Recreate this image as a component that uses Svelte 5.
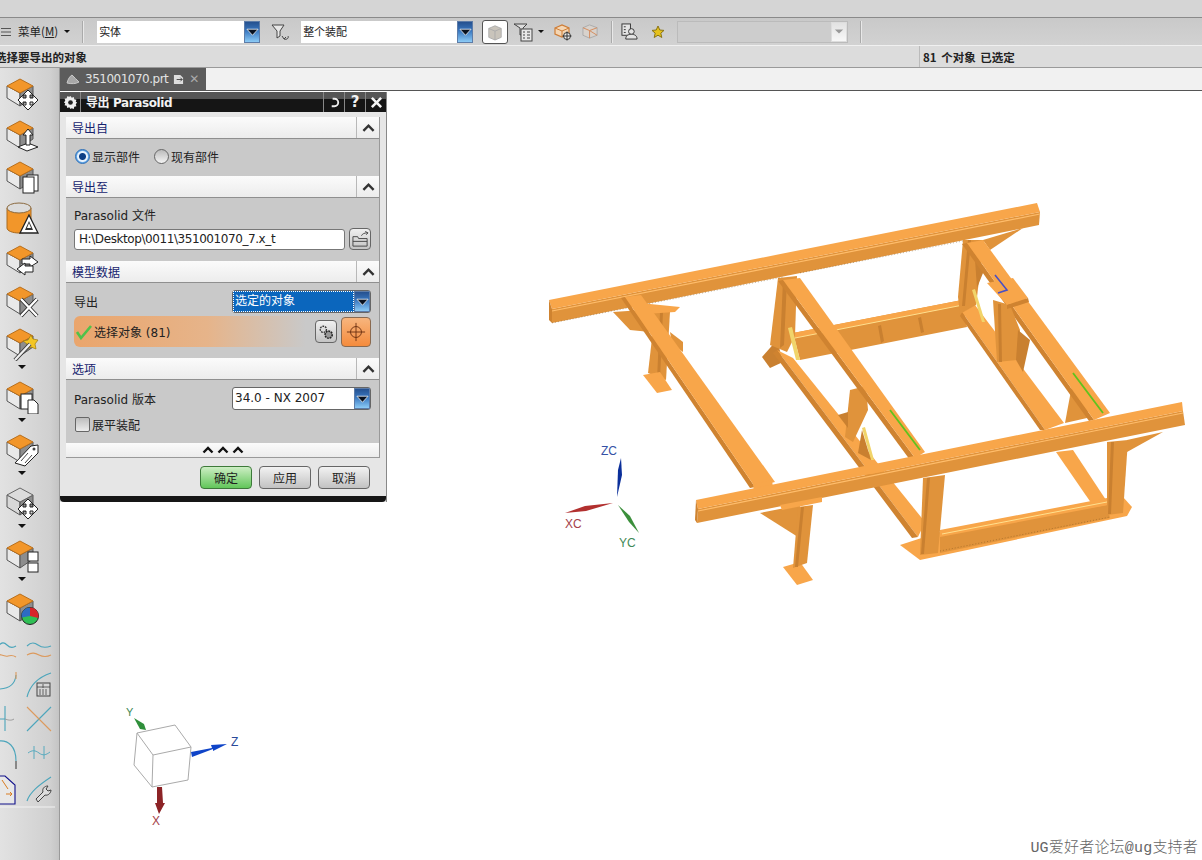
<script>
	const railItems = [
		{ kind: 'move' },
		{ kind: 'lift' },
		{ kind: 'copy' },
		{ kind: 'cyl' },
		{ kind: 'swap' },
		{ kind: 'cross' },
		{ kind: 'wand', caret: true },
		{ kind: 'pages', caret: true },
		{ kind: 'tag', caret: true },
		{ kind: 'ghost', caret: true },
		{ kind: 'split', caret: true },
		{ kind: 'pie' }
	];

	// four way arrow, the overlaps give the small hash in the middle
	const moveArrows = 'M27 12l5 5h-3v3h3v-3l5 5-5 5v-3h-3v3h3l-5 5-5-5h3v-3h-3v3l-5-5 5-5v3h3v-3h-3z';
</script>

{#snippet box(gray = false)}
	<path d="M2 9 15 16v13L2 21z" fill={gray ? '#d8d8d8' : '#e9e9e9'} stroke="#555" stroke-width="1" />
	<path d="M15 16 28 9v11L15 29z" fill="#8d8d8d" stroke="#555" stroke-width="1" />
	<path d="M15 2 28 9 15 16 2 9z" fill={gray ? '#dcdcdc' : '#f2962a'} stroke={gray ? '#666' : '#b96f1c'} stroke-width="1" />
{/snippet}

{#snippet railIcon(kind)}
	<svg class="cube" viewBox="0 0 38 34" width="38" height="34">
		{#if kind === 'cyl'}
			<path d="M2 6v20c0 3 6 5 12 5s12-2 12-5V6z" fill="#f2962a" stroke="#a86a20" />
			<ellipse cx="14" cy="6" rx="12" ry="5" fill="#dcdcdc" stroke="#8b6a40" />
		{:else}
			{@render box(kind === 'ghost')}
		{/if}

		<g transform="translate(-4 0)">
			{#if kind === 'cyl'}
				<path d="M28 13 37 31H19z" fill="#fff" stroke="#222" stroke-width="1.300" />
				<path d="M28 19 32 28H24z" fill="#333" />
				<path d="M28 21 30 26H26z" fill="#fff" />
			{:else if kind === 'move' || kind === 'ghost'}
				<path d={moveArrows} fill="#fff" stroke="#222" stroke-width="1" transform="translate(0 1)" />
			{:else if kind === 'lift'}
				<path d="M26 32l-9-4 10-4 10 4z" fill="#fff" stroke="#222" />
				<path d="M27 10l5 6h-3v10h-4V16h-3z" fill="#fff" stroke="#222" />
			{:else if kind === 'copy'}
				<rect x="26" y="15" width="11" height="16" fill="#fff" stroke="#222" />
				<rect x="22" y="17" width="11" height="16" fill="#fff" stroke="#222" />
			{:else if kind === 'swap'}
				<path d="M21 15h8v-3l8 6-8 5v-3h-8z" fill="#fff" stroke="#222" />
				<path d="M32 22h-8v-3l-8 6 8 6v-3h8z" fill="#fff" stroke="#222" />
			{:else if kind === 'cross'}
				<path d="M20 14l16 17M36 14 20 31" stroke="#222" stroke-width="4" fill="none" />
				<path d="M20 14l16 17M36 14 20 31" stroke="#fff" stroke-width="2.400" fill="none" />
			{:else if kind === 'wand'}
				<path d="M30 8l2 4 5 1-3 4 1 5-5-2-4 2v-5l-4-3 5-1z" fill="#f3c624" stroke="#9c7a10" stroke-width=".7" />
				<path d="M14 33 29 17" stroke="#333" stroke-width="4" />
				<path d="M14 33 29 17" stroke="#eee" stroke-width="2.400" />
			{:else if kind === 'pages'}
				<rect x="20" y="14" width="11" height="15" fill="#fff" stroke="#222" />
				<path d="M27 20h6l4 4v10H27z" fill="#fff" stroke="#222" />
			{:else if kind === 'tag'}
				<path d="M14 30 30 13l7-1v8L24 33z" fill="#fff" stroke="#222" />
				<circle cx="33" cy="16" r="1.500" fill="#444" />
				<path d="M20 28l7-8M24 30l7-8" stroke="#444" stroke-width="1" />
			{:else if kind === 'split'}
				<rect x="27" y="13" width="10" height="9" fill="#fff" stroke="#222" />
				<rect x="27" y="24" width="10" height="9" fill="#fff" stroke="#222" />
			{:else if kind === 'pie'}
				<circle cx="29" cy="24" r="8.500" fill="#2fbf55" stroke="#222" />
				<path d="M29 24V15.500A8.500 8.500 0 0 1 37.300 26z" fill="#d8232a" />
				<path d="M29 24 20.600 25.500A8.500 8.500 0 0 1 29 15.500z" fill="#2d6cc4" />
			{/if}
		</g>
	</svg>
{/snippet}

{#snippet ddArrow()}
	<span class="dd">
		<svg viewBox="0 0 14 8" width="13" height="8"><path d="M1 1h12L7 7.500z" fill="#08111f" stroke="#fff" stroke-width=".8" /></svg>
	</span>
{/snippet}

{#snippet chevron()}
	<svg viewBox="0 0 14 10" width="13" height="10"><path d="M1.500 8 7 2.500 12.500 8" fill="none" stroke="#333" stroke-width="2.600" /></svg>
{/snippet}

{#snippet section(title)}
	<div class="sec-head">
		<span>{title}</span>
		<i>{@render chevron()}</i>
	</div>
{/snippet}

<div class="app">
	<div class="topstrip"></div>

	<div class="toolbar">
		<svg class="burger" viewBox="0 0 10 10" width="10" height="10"><path d="M0 1.500h10M0 5h10M0 8.500h10" stroke="#555" /></svg>
		<span class="menu">菜单(<u>M</u>)</span>
		<span class="caret"></span>
		<span class="sep s1"></span>
		<div class="combo c1"><span>实体</span>{@render ddArrow()}</div>
		<svg class="tool t-filter" viewBox="0 0 20 18" width="20" height="18">
			<path d="M1 2h12L9 8v5L6 15V8z" fill="#e8e8e8" stroke="#444" />
			<path d="M13 16c3 1 5-1 4-3M11 13l2 3 2-2" fill="none" stroke="#444" />
		</svg>
		<div class="combo c2"><span>整个装配</span>{@render ddArrow()}</div>
		<button class="toggle" aria-label="实体">
			<svg viewBox="0 0 18 20" width="16" height="18">
				<path d="M2 6 9 3l7 3v10l-7 3-7-3z" fill="#c9c4bb" stroke="#aaa" />
				<path d="M2 6l7 3 7-3M9 9v10" fill="none" stroke="#aaa" />
			</svg>
		</button>
		<svg class="tool t-list" viewBox="0 0 20 20" width="20" height="20">
			<path d="M1 2h13l-4 4v6L7 13V6z" fill="#ddd" stroke="#444" />
			<rect x="8" y="7" width="11" height="12" fill="#e8e8e8" stroke="#444" />
			<path d="M10 10h2M14 10h3M10 13h2M14 13h3M10 16h2M14 16h3" stroke="#444" />
		</svg>
		<span class="caret c-list"></span>
		<svg class="tool t-box" viewBox="0 0 18 18" width="18" height="18">
			<path d="M1 5 8 2l7 3v6l-7 3-7-3z" fill="#f4d6b4" stroke="#cf7d36" stroke-width="1.200" />
			<path d="M1 5l7 3 7-3M8 8v6" fill="none" stroke="#cf7d36" />
			<circle cx="13" cy="13" r="3.500" fill="#eee" stroke="#333" />
			<path d="M13 8.500v9M8.500 13h9" stroke="#333" />
		</svg>
		<svg class="tool t-box2" viewBox="0 0 18 18" width="17" height="17">
			<path d="M1 5 8 2l8 3v8l-8 3-7-3z" fill="#d8d2cc" stroke="#aaa" />
			<path d="M1 5l7 3 8-3M8 8v8M8 8l8 5" fill="none" stroke="#d58a5a" />
		</svg>
		<span class="sep s2"></span>
		<svg class="tool t-people" viewBox="0 0 18 18" width="17" height="17">
			<rect x="1" y="1" width="9" height="12" fill="#e4e4e4" stroke="#333" />
			<path d="M3 4h2M3 7h2M3 10h2" stroke="#333" />
			<circle cx="11" cy="9" r="3" fill="#e4e4e4" stroke="#333" />
			<path d="M5 17c0-4 3-5 6-5s6 1 6 5z" fill="#e4e4e4" stroke="#333" />
		</svg>
		<svg class="tool t-star" viewBox="0 0 14 14" width="14" height="14">
			<path d="M7 1l1.800 4 4.200.4-3.200 2.800 1 4.300L7 10.200 3.200 12.500l1-4.300L1 5.400 5.200 5z" fill="#e6c21c" stroke="#8a7414" />
		</svg>
		<div class="combo c3">
			<span class="dd off"><svg viewBox="0 0 12 7" width="10" height="7"><path d="M1 1h10L6 6z" fill="#999" /></svg></span>
		</div>
		<span class="sep s3"></span>
	</div>

	<div class="status">
		<span class="prompt">选择要导出的对象</span>
		<span class="selected">81 个对象 已选定</span>
	</div>

	<div class="main">
		<aside class="rail">
			{#each railItems as item}
				<div class="rail-item" class:has-caret={item.caret}>
					{@render railIcon(item.kind)}
					{#if item.caret}<span class="caret small"></span>{/if}
				</div>
			{/each}

			<svg class="curves" viewBox="0 0 60 172" width="60" height="172" fill="none">
				<g stroke="#4ba5bb" stroke-width="1.100">
					<path d="M-2 7c4-4 6-4 9-1s6 3 9 1" />
					<path d="M27 7c4-4 7-4 11-1s8 3 13 1" />
					<path d="M-2 50c9 0 17-3 18-14" />
					<path d="M27 58c3-12 12-20 24-24" />
					<path d="M5 67v25M-2 80h7" />
					<path d="M27 92 51 68" />
					<path d="M-1 102c9-1 17 5 17 20" />
					<path d="M28 114c4-3 7-3 11 0s7 2 11-1M34 107v13M44 107v13" stroke-width=".9" />
					<path d="M27 162c3-9 12-16 24-24" />
				</g>
				<g stroke="#dc995c" stroke-width="1.100">
					<path d="M-2 15c4 1 7 3 10 2s5-1 8 1" />
					<path d="M27 16c5-3 8-2 12 0s8 2 12 0" />
					<path d="M16 33v7" />
					<path d="M27 68l24 24" />
				</g>
				<path d="M5 80c3 1 6 2 9 0" stroke="#9a9a9a" />
				<path d="M16 122v8" stroke="#333" />
				<rect x="37" y="44" width="13" height="13" fill="#d6d6d6" stroke="#444" />
				<path d="M37 48h13M40 50v6M43 50v6M46 50v6M43 45v4" stroke="#444" stroke-width=".8" />
				<path d="M-1 137h6l10 9v19H-1" fill="#e8e8e8" stroke="#10108a" stroke-width="1.100" />
				<path d="M2 141l6 9M6 155h6m-2-2 2 2-2 2" stroke="#d97c22" stroke-width="1" />
				<path d="M36 160l7-7c-1-3 1-6 5-6l-2 3 2 2 3-1c0 3-3 6-6 5l-7 7z" fill="#ddd" stroke="#444" />
				<path d="M0 168h55" stroke="#f1f1f1" stroke-width="1.200" />
			</svg>
		</aside>

		<div class="work">
			<div class="tabs">
				<div class="tab">
					<svg viewBox="0 0 14 12" width="14" height="12"><path d="M1 10c1-4 3-7 5-8 2 2 5 5 7 7-3 2-8 2-12 1z" fill="#a8a8a8" stroke="#c8c8c8" /></svg>
					<span>351001070.prt</span>
					<svg viewBox="0 0 12 12" width="11" height="11"><path d="M1 1h7l3 3v7H1z" fill="#ddd" /><path d="M4 6h6M8 4l2 2-2 2" stroke="#444" fill="none" /></svg>
					<b>✕</b>
				</div>
			</div>

			<div class="canvas">
				<svg class="scene" viewBox="60 91 1142 769" width="1142" height="769">
					<!-- feet and lower cross members, back to front -->
					<g class="model">
						<path class="web" d="M793 333 962 300 967 327 800 360z" />
						<path class="top" d="M793 333 962 300 963 305 795 338z" />
						<path d="M795 338 963 305" stroke="#ffe08e" fill="none" />
						<path class="shade" d="M878 326l3-1 3 16-3 2zM918 318l3-1 3 15-3 1z" />
						<path class="shade" d="M762 357l15-17 6 22-13 6z" />

						<path class="top" d="M777 350 793 358 925 522 918 537z" />
						<path class="dark" d="M773 353 777 350 918 537 912 538z" />
						<path class="top" d="M962 312 975 305 1064 423 1045 430z" />
						<path class="dark" d="M960 316 962 312 1045 430 1040 430z" />
						<path class="top" d="M1056 452 1073 450 1106 500 1096 510z" />

						<!-- back legs -->
						<path class="web" d="M655 312 670 312 666 380 648 373z" />
						<path class="shade" d="M660 312h3l-3 68h-3z" />
						<path class="top" d="M643 375 657 393 672 390 660 372z" />
						<path class="web" d="M613 312 657 309 650 332 630 330z" />
						<path class="top" d="M640 303 680 307 675 312 645 314z" />
						<path class="web" d="M670 332 683 342 683 352 672 344z" />

						<path class="web" d="M778 278 797 276 795 336 787 352 770 345z" />
						<path class="shade" d="M783 280h4l-3 65-4 3z" />
						<path class="web" d="M963 240 984 240 976 305 960 314 958 297z" />
						<path class="shade" d="M968 240h3l-6 66h-3z" />
						<path class="shade" d="M975 260l10 8-8 20z" />

						<!-- center back legs -->
						<path class="web" d="M850 390 866 386 868 410 853 442 845 437z" />
						<path class="shade" d="M838 415 848 412 848 428z" />
						<path class="web" d="M1072 385 1090 390 1087 418 1065 423z" />

						<!-- back rail -->
						<path class="web" d="M552 309 1040 212 1039 225 552 323z" />
						<path class="top" d="M549 300 1037 203 1040 212 552 309z" />
						<path d="M552 311 1040 214" stroke="#ffbd6b" stroke-width="1.200" fill="none" />
						<path class="edge" d="M552 323 783 277M800 273 963 241" />
						<path class="dark" d="M549 300 552 309 552 323 549 320z" />
						<path class="web" d="M983 240 1023 228 990 250z" />

						<!-- long side members -->
						<path class="dark" d="M621 298 625 297 755 487 750 488z" />
						<path class="top" d="M625 297 641 295 775 482 755 487z" />
						<path class="dark" d="M778 281 783 280 915 458 910 460z" />
						<path class="top" d="M783 280 800 278 925 452 915 458z" />
						<path class="dark" d="M962 244 967 243 1094 420 1089 421z" />
						<path class="top" d="M967 243 983 240 1110 413 1094 420z" />

						<!-- gussets -->
						<path d="M788 328 792 327 800 360 796 360z" fill="#f1d46a" />
						<path d="M972 290 975 289 985 322 982 322z" fill="#f1d46a" />
						<path d="M862 428 865 427 874 460 871 460z" fill="#f1d46a" />
						<path class="shade" d="M862 430l9 30-13-7z" />

						<!-- block with the blue mark and its leg -->
						<path class="web" d="M993 300 1010 305 1020 330 1017 360 997 362z" />
						<path class="shade" d="M998 304h3l1 58h-3z" />
						<path class="shade" d="M1018 330 1030 340 1023 372 1016 360z" />
						<path class="top" d="M987 283 1013 278 1028 298 1007 305z" />
						<path class="dark" d="M1007 305 1028 298 1029 302 1007 309z" />
						<path d="M995 275 1007 290 998 293" fill="none" stroke="#4a4fc4" stroke-width="1.600" />

						<!-- front frame -->
						<path class="top" d="M900 545 920 560 1127 516 1132 507 1123 497 940 532z" />
						<path class="web" d="M940 534 1107 505 1110 518 940 553z" />
						<path class="top" d="M940 530 1107 498 1108 505 940 537z" />
						<path d="M942 534 1107 502" stroke="#ffe08e" fill="none" />
						<path class="edge" d="M940 551 1110 517" />
						<path class="web" d="M923 478 945 475 938 553 920 555z" />
						<path class="shade" d="M927 478h3l-6 76h-3z" />
						<path class="web" d="M1107 442 1128 440 1123 513 1107 515z" />
						<path class="shade" d="M1111 442h3l-3 72h-3z" />
						<path class="top" d="M753 484 772 480 773 488 754 492z" />

						<!-- front left leg -->
						<path class="web" d="M760 513 800 505 798 537z" />
						<path class="top" d="M783 567 797 585 813 580 800 562z" />
						<path class="web" d="M798 507 813 505 807 563 793 568z" />
						<path class="shade" d="M801 507h3l-6 60h-3z" />
						<path class="web" d="M1127 452 1163 432 1127 440z" />

						<!-- front rail -->
						<path class="web" d="M698 509 1183 411 1185 425 697 523z" />
						<path class="top" d="M696 500 1182 402 1183 411 698 509z" />
						<path d="M698 511 1183 413" stroke="#ffbd6b" stroke-width="1.200" fill="none" />
						<path class="dark" d="M696 500 698 509 697 523 695 520z" />
						<path class="top" d="M780 505 822 497 822 502 782 510z" />
					</g>
					<path d="M890 410 920 450M1073 373 1103 413" stroke="#5fc31d" stroke-width="1.800" />

					<!-- datum triad -->
					<path d="M617 497 618 470 621 458 622 475z" fill="#0b2f9a" />
					<path d="M613 503 585 506 565 513 586 511z" fill="#b2302f" />
					<path d="M618 505 630 516 639 533 629 522z" fill="#3b8f3b" />
					<text x="601" y="455" class="triad" fill="#3551a5">ZC</text>
					<text x="565" y="528" class="triad" fill="#a5414a">XC</text>
					<text x="619" y="547" class="triad" fill="#3f8a56">YC</text>

					<!-- orientation cube -->
					<path d="M137 733 175 725 191 747 153 755zM137 733 134 765 152 787 188 780 191 747M153 755 152 787" fill="#fff" stroke="#aaa" />
					<path d="M191 752 212 748 211 745 227 744 213 751 213 749 192 757z" fill="#0f44c8" />
					<path d="M157 787h5l1 16 2 0-6 11-4-11h2z" fill="#8c2326" />
					<path d="M146 730 140 729 134 718 144 724z" fill="#2f8f3a" />
					<text x="231" y="746" class="triad" fill="#2a4a9a">Z</text>
					<text x="152" y="825" class="triad" fill="#a5414a">X</text>
					<text x="126" y="716" class="triad small" fill="#3f8a56">Y</text>
				</svg>

				<div class="dialog">
					<div class="title">
						<span class="t-gear">
							<svg viewBox="0 0 16 16" width="15" height="15"><path d="M8 1l1.300 1.900 2.200-.7.500 2.300 2.300.5-.7 2.200L15 8l-1.400 1.800.7 2.200-2.300.5-.5 2.300-2.200-.7L8 15l-1.300-1.900-2.200.7-.5-2.300-2.300-.5.7-2.200L1 8l1.400-1.800-.7-2.200 2.300-.5.500-2.300 2.200.7z" fill="#eee" /><circle cx="8" cy="8" r="2.500" fill="#222" /></svg>
						</span>
						<span class="t-text">导出 Parasolid</span>
						<span class="t-btn"><svg viewBox="0 0 14 14" width="13" height="13"><path d="M5 3h2a4 4 0 0 1 0 8H4" fill="none" stroke="#eee" stroke-width="2" /></svg></span>
						<span class="t-btn q">?</span>
						<span class="t-btn x"><svg viewBox="0 0 14 14" width="13" height="13"><path d="M2 2l10 10M12 2 2 12" stroke="#f4f4f4" stroke-width="2.800" /></svg></span>
					</div>

					<div class="sections">
						{@render section('导出自')}
						<div class="sec-body radios">
							<label class="radio on"><i></i>显示部件</label>
							<label class="radio"><i></i>现有部件</label>
						</div>

						{@render section('导出至')}
						<div class="sec-body file">
							<div class="lbl">Parasolid 文件</div>
							<div class="file-row">
								<div class="input">H:\Desktop\0011\351001070_7.x_t</div>
								<button class="mini" aria-label="浏览">
									<svg viewBox="0 0 20 18" width="19" height="17" fill="none" stroke="#444"><path d="M2 16V6h5l1 2h9v8zM2 11h15" /><path d="M11 5c1-2 3-3 6-3m-2-1.500L18 2l-2 2" /></svg>
								</button>
							</div>
						</div>

						{@render section('模型数据')}
						<div class="sec-body data">
							<div class="row">
								<span>导出</span>
								<div class="select sel"><span>选定的对象</span>{@render ddArrow()}</div>
							</div>
							<div class="pick">
								<svg viewBox="0 0 18 16" width="18" height="16"><path d="M2 8l4 6L16 2" fill="none" stroke="#4fc24a" stroke-width="2.600" /></svg>
								<span>选择对象 (81)</span>
								<button class="mini gear" aria-label="设置">
									<svg viewBox="0 0 18 18" width="16" height="16"><circle cx="6" cy="6" r="3.500" fill="#ddd" stroke="#333" stroke-width="1.500" stroke-dasharray="2 1" /><circle cx="12" cy="12" r="4" fill="#999" stroke="#222" stroke-width="1.800" stroke-dasharray="2 1" /></svg>
								</button>
								<button class="target" aria-label="选择">
									<svg viewBox="0 0 22 22" width="20" height="20" fill="none" stroke="#6b2f10"><circle cx="11" cy="11" r="6" /><path d="M11 1v20M1 11h20" /></svg>
								</button>
							</div>
						</div>

						{@render section('选项')}
						<div class="sec-body opts">
							<div class="row">
								<span>Parasolid 版本</span>
								<div class="select"><span>34.0 - NX 2007</span>{@render ddArrow()}</div>
							</div>
							<label class="check"><i></i>展平装配</label>
						</div>

						<div class="more">
							{#each [0, 1, 2] as n (n)}
								<svg viewBox="0 0 12 8" width="12" height="8"><path d="M1.500 6.500 6 2l4.500 4.500" fill="none" stroke="#111" stroke-width="2.400" /></svg>
							{/each}
						</div>
					</div>

					<div class="actions">
						<button class="ok">确定</button>
						<button>应用</button>
						<button>取消</button>
					</div>
					<div class="foot"></div>
				</div>

				<div class="watermark">UG爱好者论坛@ug支持者</div>
			</div>
		</div>
	</div>
</div>

<style>
	:global(body) {
		margin: 0;
		background: #fff;
	}

	.app {
		width: 1202px;
		height: 860px;
		overflow: hidden;
		display: flex;
		flex-direction: column;
		font-family: "DejaVu Sans", "Noto Sans CJK SC", sans-serif;
		font-size: 12px;
		color: #222;
	}

	.topstrip {
		height: 17px;
		flex: none;
		background: #d5d5d5;
		border-bottom: 1px solid #8a8a8a;
	}

	/* ── toolbar ── */
	.toolbar {
		height: 27px;
		flex: none;
		display: flex;
		align-items: center;
		background: linear-gradient(#c9c9c9, #d2d2d2);
		border-bottom: 1px solid #f0f0f0;
	}

	.burger { margin-left: 1px; }

	.menu {
		margin: -1px 0 0 7px;
		font-family: "Noto Sans CJK SC", sans-serif;
		font-size: 11.500px;
	}

	.caret {
		width: 0;
		height: 0;
		border: 3px solid transparent;
		border-top: 3px solid #111;
		border-bottom: 0;
		margin-left: 6px;
		flex: none;
	}

	.caret.small {
		margin: 4px 0 0 0;
		border-width: 4px 4px 0;
		border-color: #111 transparent transparent;
	}

	.sep {
		width: 1px;
		height: 22px;
		background: #aaa;
		box-shadow: 1px 0 #e8e8e8;
		flex: none;
	}

	.s1 { margin-left: 12px; }
	.s2 { margin-left: 12px; }
	.s3 { margin-left: 12px; }

	.combo {
		height: 22px;
		background: #fff;
		display: flex;
		align-items: stretch;
		justify-content: space-between;
		flex: none;
		box-sizing: border-box;
	}

	.combo > span:first-child:not(.dd) {
		padding: 2px 0 0 2px;
		font-family: "Noto Sans CJK SC", sans-serif;
		font-size: 11px;
	}

	.c1 { width: 163px; margin-left: 14px; }
	.c2 { width: 172px; margin-left: 10px; }
	.c3 {
		width: 171px;
		margin-left: 12px;
		background: #cdcdcd;
		border: 1px solid #bbb;
		justify-content: flex-end;
	}

	.dd {
		width: 16px;
		display: flex;
		align-items: center;
		justify-content: center;
		flex: none;
		background: linear-gradient(#25508f, #3a78c0 45%, #8ccbf6);
		border: 1px solid #5d7ca8;
		box-sizing: border-box;
	}

	.dd.off {
		background: linear-gradient(#e2e2e2, #f8f8f8);
		border-color: #ddd;
	}

	.tool { flex: none; }
	.t-filter { margin-left: 11px; }
	.t-list { margin-left: 5px; }
	.c-list { margin-left: 5px; }
	.t-box { margin-left: 10px; }
	.t-box2 { margin-left: 10px; }
	.t-people { margin-left: 9px; }
	.t-star { margin-left: 13px; }

	.toggle {
		width: 26px;
		height: 24px;
		margin-left: 9px;
		padding: 0;
		background: #fff;
		border: 1px solid #555;
		border-radius: 3px;
		display: flex;
		align-items: center;
		justify-content: center;
		flex: none;
	}

	/* ── status line ── */
	.status {
		height: 21px;
		flex: none;
		display: flex;
		align-items: center;
		background: #dcdcdc;
		border-bottom: 1px solid #9a9a9a;
		font-family: "Noto Sans CJK SC", sans-serif;
		font-size: 11.500px;
		font-weight: 700;
	}

	.prompt { margin-left: -5px; width: 924px; flex: none; }
	.selected {
		border-left: 1px solid #bbb;
		padding-left: 3px;
		height: 100%;
		display: flex;
		align-items: center;
		word-spacing: 2px;
	}

	/* ── left rail ── */
	.main {
		flex: 1;
		display: flex;
		min-height: 0;
	}

	.rail {
		width: 60px;
		flex: none;
		box-sizing: border-box;
		padding-top: 9px;
		background: linear-gradient(90deg, #e2e2e2, #d0d0d0 85%, #c4c4c4);
		border-right: 1px solid #999;
		display: flex;
		flex-direction: column;
	}

	.rail-item {
		height: 41.700px;
		padding-left: 5px;
		flex: none;
	}

	.rail-item.has-caret {
		height: 53px;
		display: flex;
		flex-direction: column;
	}

	.rail-item .caret.small {
		margin-left: 13px;
	}

	.curves {
		margin-top: 5px;
		flex: none;
	}

	/* ── work area ── */
	.work {
		flex: 1;
		min-width: 0;
		display: flex;
		flex-direction: column;
	}

	.tabs {
		height: 23px;
		flex: none;
		background: #f1f1f1;
		border-bottom: 1px solid #555;
		box-sizing: border-box;
	}

	.tab {
		width: 146px;
		height: 22px;
		box-sizing: border-box;
		padding-left: 6px;
		background: #5c5c5c;
		color: #e2e2e2;
		display: flex;
		align-items: center;
		gap: 5px;
		font-size: 12px;
	}

	.tab span { letter-spacing: -.5px; }

	.tab b {
		font-weight: 400;
		font-size: 12px;
		color: #aaa;
	}

	.canvas {
		flex: 1;
		position: relative;
		background: #fff;
		overflow: hidden;
	}

	.scene {
		position: absolute;
		left: 0;
		top: 0;
	}

	.model .top { fill: #f8a64a; }
	.model .web { fill: #e0933b; }
	.model .dark { fill: #cf8330; }
	.model .shade { fill: #c98030; }
	.model .edge {
		fill: none;
		stroke: #5b3b10;
		stroke-dasharray: 1 2;
		stroke-opacity: .45;
		stroke-width: .8;
	}

	.triad {
		font-size: 12px;
		font-family: "Liberation Sans", sans-serif;
	}

	.triad.small { font-size: 11px; }

	.watermark {
		position: absolute;
		right: 4px;
		bottom: 3px;
		font-family: "Liberation Mono", "Noto Sans CJK SC", monospace;
		font-size: 15px;
		letter-spacing: .2px;
		font-weight: 300;
		color: #666;
	}

	/* ── dialog ── */
	.dialog {
		position: absolute;
		left: 0;
		top: 1px;
		width: 327px;
		background: #e6e6e6;
		font-family: "DejaVu Sans", "Noto Sans CJK SC", sans-serif;
		font-size: 12px;
		border-right: 1px solid #888;
		box-sizing: border-box;
	}

	.title {
		height: 20px;
		display: flex;
		align-items: stretch;
		color: #f2f2f2;
		font-weight: 700;
		background: linear-gradient(#555 0 7px, #151515 7px);
	}

	.t-gear {
		width: 20px;
		display: flex;
		align-items: center;
		justify-content: center;
		border-right: 1px solid #888;
	}

	.t-text {
		flex: 1;
		padding: 1px 0 0 5px;
		font-size: 12px;
		letter-spacing: -.4px;
	}

	.t-btn {
		width: 20px;
		display: flex;
		align-items: center;
		justify-content: center;
		border-left: 1px solid #888;
	}

	.t-btn.q { font-size: 15px; }

	.sections {
		margin: 5px 6px 0;
		border-right: 1px solid #999;
		border-bottom: 1px solid #999;
		background: #c9c9c9;
	}

	.sec-head {
		height: 22px;
		box-sizing: border-box;
		display: flex;
		justify-content: space-between;
		background: linear-gradient(#fbfbfb, #ececec);
		border-bottom: 1px solid #8f8f8f;
		color: #16236e;
		font-family: "Noto Sans CJK SC", sans-serif;
		font-size: 12px;
	}

	.sec-head span { padding: 2px 0 0 6px; }

	.sec-head i {
		width: 22px;
		border-left: 1px solid #b8b8b8;
		display: flex;
		align-items: center;
		justify-content: center;
	}

	.sec-body {
		background: #c9c9c9;
		box-sizing: border-box;
		padding: 0 8px 0 8px;
		font-family: "DejaVu Sans", "Noto Sans CJK SC", sans-serif;
	}

	.radios {
		height: 37px;
		display: flex;
		align-items: center;
		gap: 14px;
		padding: 0 0 3px 9px;
	}

	.radio, .check {
		display: flex;
		align-items: center;
		gap: 2px;
		font-size: 12px;
	}

	.radio i {
		width: 15px;
		height: 15px;
		box-sizing: border-box;
		border-radius: 50%;
		border: 1px solid #666;
		background: linear-gradient(#bbb, #f4f4f4);
	}

	.radio.on i {
		border-color: #2c6fb8;
		background: radial-gradient(circle, #0d3f86 0 3px, #e8f2fc 4px 5px, #66a8e6 6px);
	}

	.file { height: 63px; padding-top: 10px; }

	.lbl { height: 19px; line-height: 17px; }

	.file-row {
		display: flex;
		justify-content: space-between;
		align-items: center;
		margin-top: 1px;
	}

	.input {
		width: 271px;
		height: 21px;
		box-sizing: border-box;
		padding-left: 4px;
		line-height: 19px;
		letter-spacing: -.42px;
		background: #fff;
		border: 1px solid #777;
		border-radius: 3px;
	}

	.mini {
		width: 22px;
		height: 22px;
		padding: 0;
		display: flex;
		align-items: center;
		justify-content: center;
		background: linear-gradient(#f0f0f0, #c4c4c4);
		border: 1px solid #666;
		border-radius: 4px;
	}

	.data { height: 75px; padding-top: 7px; }

	.row {
		display: flex;
		justify-content: space-between;
		align-items: center;
	}

	.select {
		width: 139px;
		height: 23px;
		box-sizing: border-box;
		display: flex;
		justify-content: space-between;
		background: #fff;
		border: 1px solid #666;
		border-radius: 3px;
		line-height: 21px;
	}

	.select > span:first-child { padding-left: 2px; }

	.select.sel > span:first-child {
		flex: 1;
		background: #0b66bd;
		color: #fff;
		outline: 1px dotted #fff;
		outline-offset: -1px;
	}

	.pick {
		height: 31px;
		margin-top: 3px;
		display: flex;
		align-items: center;
		border-radius: 6px;
		background: linear-gradient(90deg, #eaa56c, #e6b48a 45%, #c9c9c9 78%);
	}

	.pick > svg { margin-left: 1px; }
	.pick > span { margin-left: 1px; flex: 1; }

	.gear { height: 23px; margin-right: 4px; }

	.target {
		width: 30px;
		height: 30px;
		padding: 0;
		display: flex;
		align-items: center;
		justify-content: center;
		background: linear-gradient(#f7b57e, #f58b3c);
		border: 1px solid #8a6a50;
		border-radius: 4px;
	}

	.opts { height: 63px; padding-top: 7px; }

	.check { margin: 6px 0 0 1px; }

	.check i {
		width: 15px;
		height: 15px;
		box-sizing: border-box;
		border: 1px solid #666;
		border-radius: 2px;
		background: linear-gradient(#bdbdbd, #ececec);
	}

	.more {
		height: 14px;
		display: flex;
		align-items: center;
		justify-content: center;
		gap: 3px;
		background: linear-gradient(#fbfbfb, #ececec);
	}

	.actions {
		height: 38px;
		box-sizing: border-box;
		padding: 8px 16px 0 0;
		display: flex;
		justify-content: flex-end;
		gap: 7px;
	}

	.actions button {
		width: 52px;
		height: 23px;
		padding: 0;
		font: inherit;
		color: #222;
		background: linear-gradient(#f2f2f2, #c2c2c2);
		border: 1px solid #666;
		border-radius: 4px;
	}

	.actions .ok {
		background: linear-gradient(#cdeec4, #62c65a);
		border-color: #3d7a3a;
	}

	.foot {
		height: 6px;
		background: #161616;
		border-radius: 0 0 4px 4px;
	}
</style>
